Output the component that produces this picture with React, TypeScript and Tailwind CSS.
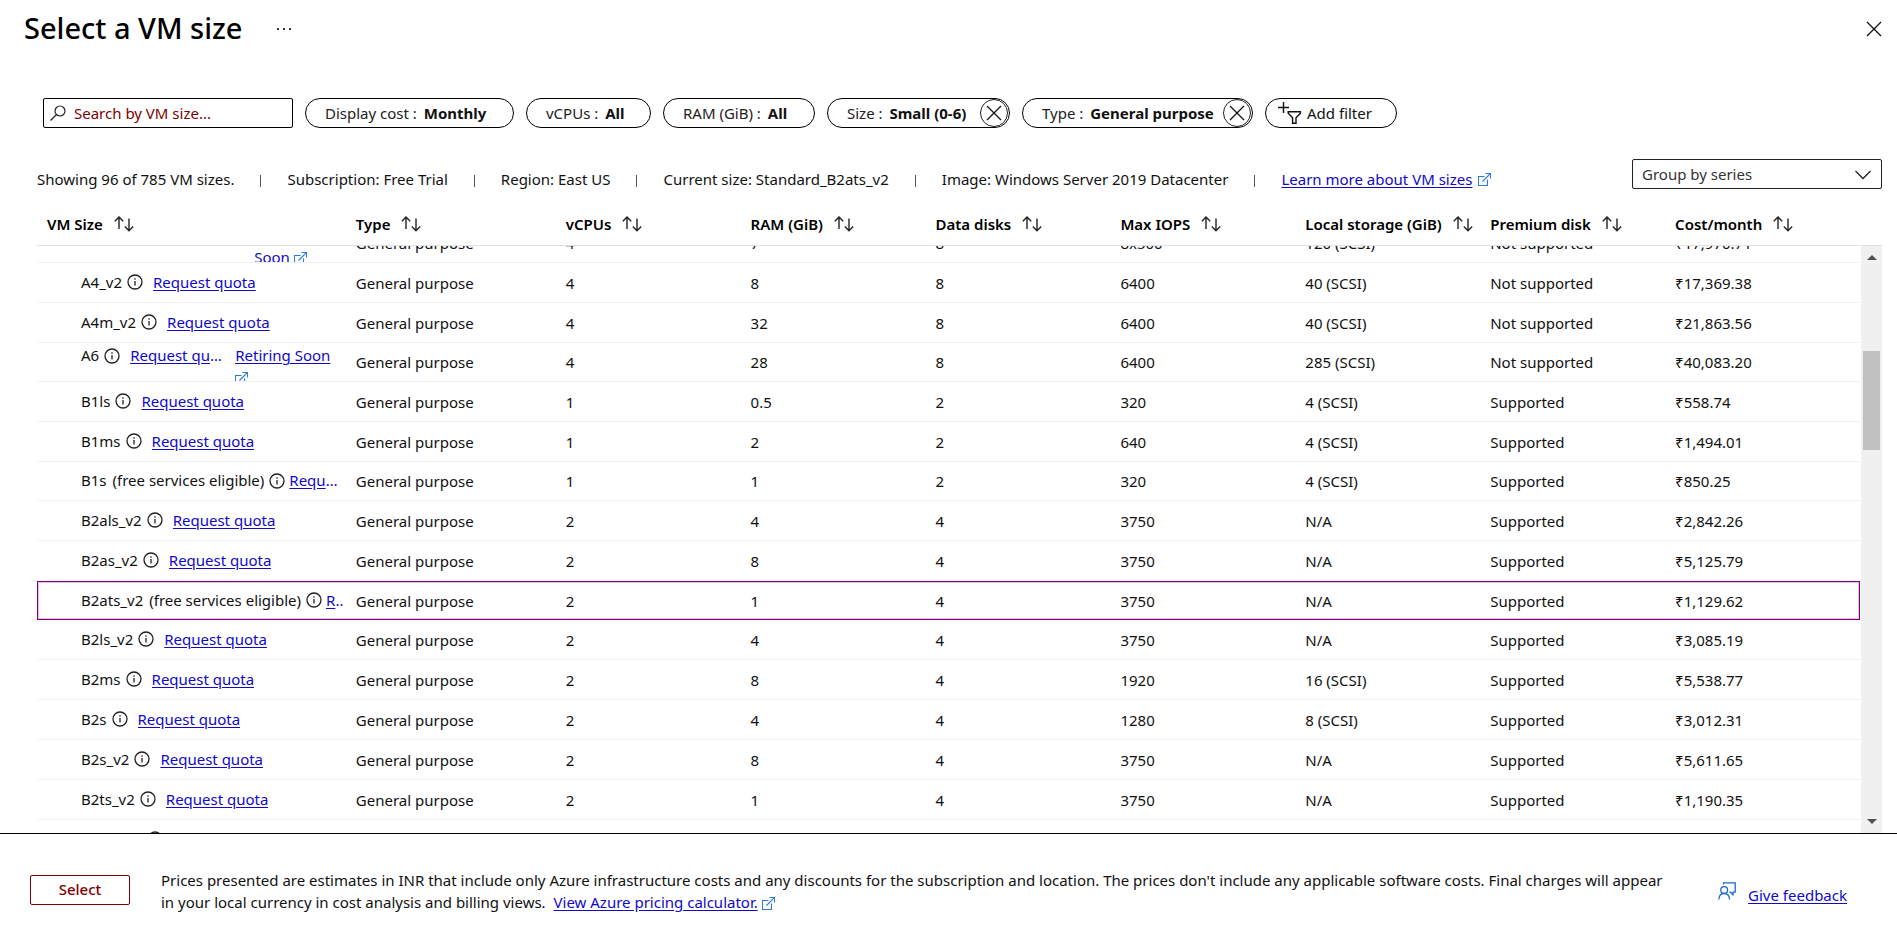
import { Fragment, useLayoutEffect, useRef } from "react";
import type { ReactNode } from "react";

type VmSize = {
  name: string;
  free?: boolean;
  retiring?: "wrap-text" | "wrap-icon";
  selected?: boolean;
  cells: string[];
};

const GP = "General purpose";

const SIZES: VmSize[] = [
  { name: "A3", retiring: "wrap-text", cells: [GP, "4", "7", "8", "8x500", "120 (SCSI)", "Not supported", "₹17,970.71"] },
  { name: "A4_v2", cells: [GP, "4", "8", "8", "6400", "40 (SCSI)", "Not supported", "₹17,369.38"] },
  { name: "A4m_v2", cells: [GP, "4", "32", "8", "6400", "40 (SCSI)", "Not supported", "₹21,863.56"] },
  { name: "A6", retiring: "wrap-icon", cells: [GP, "4", "28", "8", "6400", "285 (SCSI)", "Not supported", "₹40,083.20"] },
  { name: "B1ls", cells: [GP, "1", "0.5", "2", "320", "4 (SCSI)", "Supported", "₹558.74"] },
  { name: "B1ms", cells: [GP, "1", "2", "2", "640", "4 (SCSI)", "Supported", "₹1,494.01"] },
  { name: "B1s", free: true, cells: [GP, "1", "1", "2", "320", "4 (SCSI)", "Supported", "₹850.25"] },
  { name: "B2als_v2", cells: [GP, "2", "4", "4", "3750", "N/A", "Supported", "₹2,842.26"] },
  { name: "B2as_v2", cells: [GP, "2", "8", "4", "3750", "N/A", "Supported", "₹5,125.79"] },
  { name: "B2ats_v2", free: true, selected: true, cells: [GP, "2", "1", "4", "3750", "N/A", "Supported", "₹1,129.62"] },
  { name: "B2ls_v2", cells: [GP, "2", "4", "4", "3750", "N/A", "Supported", "₹3,085.19"] },
  { name: "B2ms", cells: [GP, "2", "8", "4", "1920", "16 (SCSI)", "Supported", "₹5,538.77"] },
  { name: "B2s", cells: [GP, "2", "4", "4", "1280", "8 (SCSI)", "Supported", "₹3,012.31"] },
  { name: "B2s_v2", cells: [GP, "2", "8", "4", "3750", "N/A", "Supported", "₹5,611.65"] },
  { name: "B2ts_v2", cells: [GP, "2", "1", "4", "3750", "N/A", "Supported", "₹1,190.35"] },
  { name: "B4als_v2", cells: [GP, "4", "8", "8", "6400", "N/A", "Supported", "₹5,684.53"] },
];

const COLUMNS = [
  "VM Size",
  "Type",
  "vCPUs",
  "RAM (GiB)",
  "Data disks",
  "Max IOPS",
  "Local storage (GiB)",
  "Premium disk",
  "Cost/month",
];

const GRID =
  "grid grid-cols-[minmax(0,309fr)_minmax(0,210fr)_repeat(6,minmax(0,185fr))_minmax(0,195fr)]";

const INFO = [
  "Showing 96 of 785 VM sizes.",
  "Subscription: Free Trial",
  "Region: East US",
  "Current size: Standard_B2ats_v2",
  "Image: Windows Server 2019 Datacenter",
];

const LINK = "text-[#1008cc] underline underline-offset-2";

function ExternalIcon() {
  return (
    <svg className="inline-block size-[13px] shrink-0" viewBox="0 0 13 13" fill="none" stroke="#2f7ae0" strokeWidth="1.1" aria-hidden="true">
      <path d="M6.5 3.5H.5v9h9V6.5" />
      <path d="M4.5 8.5 12 1M7.5.5h5v5" />
    </svg>
  );
}

function SortIcon() {
  return (
    <svg className="h-4 w-5 shrink-0" viewBox="0 0 20 16" fill="none" stroke="#222" strokeWidth="1.4" aria-hidden="true">
      <path d="M5 13V1M.8 5.2 5 1l4.2 4.2" />
      <path d="M15 2.5v12.3M10.8 10.6 15 14.8l4.2-4.2" />
    </svg>
  );
}

function InfoIcon() {
  return (
    <svg className="size-4 shrink-0" viewBox="0 0 16 16" fill="none" stroke="#222" strokeWidth="1.3" aria-hidden="true">
      <circle cx="8" cy="8" r="7" />
      <path d="M8 7v4.5M8 4.3v1.4" />
    </svg>
  );
}

function CrossIcon({ className }: { className: string }) {
  return (
    <svg className={className} viewBox="0 0 16 16" fill="none" stroke="#111" strokeWidth="1.3" aria-hidden="true">
      <path d="m1 1 14 14M15 1 1 15" />
    </svg>
  );
}

function Pill({ label, value, width, removable }: { label: string; value: string; width: string; removable?: boolean }) {
  return (
    <div className={`${width} flex h-[30px] items-center rounded-full border border-black`}>
      <button type="button" className="h-full flex-1 pl-[19px] text-left whitespace-nowrap text-[#222]">
        {label} : <span className="ml-[3px] font-bold text-[#111]">{value}</span>
      </button>
      {removable && (
        <button type="button" aria-label={`Remove ${label} filter`} className="mr-px flex size-[28px] shrink-0 items-center justify-center rounded-full border border-[#222]">
          <CrossIcon className="size-4" />
        </button>
      )}
    </div>
  );
}

function NameCell({ size }: { size: VmSize }) {
  let links: ReactNode;
  if (size.retiring) {
    const wrapText = size.retiring === "wrap-text";
    links = (
      <>
        <a href="#quota" className={`${LINK} ml-[10px] truncate ${wrapText ? "w-[106px]" : "w-24"}`}>Request quota</a>
        <span className={wrapText ? "ml-[18px] w-20" : "ml-[9px] w-[102px]"}>
          <a href="#retiring" className={LINK}>Retiring Soon</a> <ExternalIcon />
        </span>
      </>
    );
  } else {
    links = <a href="#quota" className={`${LINK} truncate ${size.free ? "ml-1" : "ml-[10px]"}`}>Request quota</a>;
  }
  return (
    <div className={`flex h-full overflow-hidden pr-[2px] pl-11 leading-[22px] ${size.retiring ? "items-start pt-px" : "items-center pb-[2px]"}`}>
      <span className="whitespace-nowrap">
        {size.name}
        {size.free && <span className="ml-[6px]">(free services eligible)</span>}
      </span>
      <button type="button" aria-label={`About ${size.name}`} className="ml-[5px] flex h-[22px] shrink-0 items-center pt-px">
        <InfoIcon />
      </button>
      {links}
    </div>
  );
}

export default function App() {
  const body = useRef<HTMLTableSectionElement>(null);

  useLayoutEffect(() => {
    if (body.current) body.current.scrollTop = 23;
  }, []);

  return (
    <div className="flex h-screen flex-col bg-white font-['Noto_Sans','Open_Sans',sans-serif] text-[15px] leading-5 text-[#111]">
      <header className="flex h-[58px] items-center pr-[15px] pl-6">
        <h1 className="pb-[2px] text-[29px] leading-10 font-medium text-black">Select a VM size</h1>
        <button type="button" aria-label="More" className="ml-[34px] flex gap-1">
          <span className="size-[2px] bg-[#333]" />
          <span className="size-[2px] bg-[#333]" />
          <span className="size-[2px] bg-[#333]" />
        </button>
        <button type="button" aria-label="Close" className="ml-auto">
          <CrossIcon className="size-4" />
        </button>
      </header>

      <div className="mt-10 flex items-center gap-3 px-[43px]">
        <label className="flex h-[30px] w-[250px] items-center gap-2 rounded-[2px] border border-black px-[6px]">
          <svg className="size-4 shrink-0" viewBox="0 0 16 16" fill="none" stroke="#222" strokeWidth="1.2" aria-hidden="true">
            <circle cx="10" cy="6" r="5" />
            <path d="M6.5 9.5.5 15.5" />
          </svg>
          <input aria-label="Search by VM size" placeholder="Search by VM size..." className="min-w-0 flex-1 outline-none placeholder:text-[#800000] placeholder:opacity-100" />
        </label>
        <Pill label="Display cost" value="Monthly" width="w-[209px]" />
        <Pill label="vCPUs" value="All" width="w-[125px]" />
        <Pill label="RAM (GiB)" value="All" width="w-[152px]" />
        <Pill label="Size" value="Small (0-6)" width="w-[183px]" removable />
        <Pill label="Type" value="General purpose" width="w-[231px]" removable />
        <button type="button" className="flex h-[30px] w-[132px] items-center gap-[5px] rounded-full border border-black pl-3">
          <svg className="h-[22px] w-6" viewBox="0 0 24 22" fill="none" stroke="#111" strokeWidth="1.4" aria-hidden="true">
            <path d="M5.5 0v11M0 5.5h11" />
            <path d="M10.2 9.7h12.2v1.5l-4.4 4.6v5.4h-3.4v-5.4l-4.4-4.6z" />
          </svg>
          Add filter
        </button>
      </div>

      <div className="mt-[31px] flex h-[42px] items-start pr-[15px] pl-[37px]">
        <div className="flex items-center gap-[26px] pt-[10px] whitespace-nowrap">
          {INFO.map((text) => (
            <Fragment key={text}>
              <span>{text}</span>
              <span className="mt-1 h-3 w-px bg-[#555]" />
            </Fragment>
          ))}
          <span className="flex items-center gap-[6px]">
            <a href="#sizes" className={LINK}>Learn more about VM sizes</a>
            <ExternalIcon />
          </span>
        </div>
        <div className="relative ml-auto w-[250px]">
          <select aria-label="Grouping" className="h-[30px] w-full appearance-none rounded-[2px] border border-[#222] bg-white px-[9px] text-[#333]">
            <option>Group by series</option>
          </select>
          <svg className="pointer-events-none absolute top-[11px] right-[11px] h-[10px] w-4" viewBox="0 0 16 10" fill="none" stroke="#222" strokeWidth="1.3" aria-hidden="true">
            <path d="m.5 1 7.5 7.5L15.5 1" />
          </svg>
        </div>
      </div>

      <main className="flex min-h-0 flex-1 pr-[15px] pl-[37px]">
        <table className="mr-px flex min-w-0 flex-1 flex-col">
          <thead className="block border-b border-[#e1e1e1]">
            <tr className={`${GRID} h-[44px] items-center pt-[2px]`}>
              {COLUMNS.map((title) => (
                <th key={title} scope="col" className="pl-[10px] text-left font-semibold whitespace-nowrap text-black">
                  <button type="button" className="flex items-center gap-[11px]">
                    {title}
                    <SortIcon />
                  </button>
                </th>
              ))}
            </tr>
          </thead>
          <tbody ref={body} className="block min-h-0 flex-1 overflow-y-auto [scrollbar-width:none]">
            {SIZES.map((size) => (
              <tr
                key={size.name}
                className={`${GRID} items-center ${
                  size.selected
                    ? "h-[39px] shadow-[inset_0_0_0_1px_#800080,inset_0_0_0_2px_#e3bfe3]"
                    : size.free || size.retiring === "wrap-icon"
                      ? "h-[39px] border-b border-[#f0f0f0]"
                      : "h-10 border-b border-[#f0f0f0]"
                }`}
              >
                <td className="h-full min-h-0 overflow-hidden">
                  <NameCell size={size} />
                </td>
                {size.cells.map((cell, i) => (
                  <td key={COLUMNS[i + 1]} className="pl-[10px] whitespace-nowrap">
                    {cell}
                  </td>
                ))}
              </tr>
            ))}
          </tbody>
        </table>
        <div className="flex w-[21px] flex-col pt-[44px]" aria-hidden="true">
          <div className="flex flex-1 flex-col items-center border-t border-[#e1e1e1] bg-[#f0f0f0] pt-[9px] pb-[9px]">
            <svg className="h-[5px] w-[10px]" viewBox="0 0 10 5" fill="#505050"><path d="M0 5 5 0l5 5z" /></svg>
            <div className="mt-[91px] h-[99px] w-[17px] bg-[#c1c1c1]" />
            <svg className="mt-auto h-[5px] w-[10px]" viewBox="0 0 10 5" fill="#505050"><path d="m0 0 5 5 5-5z" /></svg>
          </div>
        </div>
      </main>

      <footer className="flex h-[99px] items-center border-t border-black pr-[50px] pl-[30px]">
        <button type="button" className="mt-[13px] h-[30px] w-[100px] shrink-0 rounded-[2px] border border-[#800000] pb-px font-medium text-[#800000]">
          Select
        </button>
        <p className="mt-4 ml-[31px] max-w-[1510px] flex-1 leading-[22px]">
          Prices presented are estimates in INR that include only Azure infrastructure costs and any discounts for the
          subscription and location. The prices don't include any applicable software costs. Final charges will appear
          in your local currency in cost analysis and billing views.{" "}
          <a href="#calculator" className={`${LINK} ml-1`}>View Azure pricing calculator.</a>{" "}
          <ExternalIcon />
        </p>
        <div className="mt-6 ml-auto flex shrink-0 items-center gap-3">
          <svg className="mb-2 size-[18px]" viewBox="0 0 18 18" fill="none" stroke="#1a66d6" strokeWidth="1.3" aria-hidden="true">
            <path d="M5.5 2.6V.8h11.7v9.4H15v2.6l-2.6-2.6h-1" />
            <circle cx="6.2" cy="8" r="3.4" />
            <path d="M.8 17.5c.2-3.8 2.3-6 5.4-6s5.200 2.200 5.400 6" />
          </svg>
          <a href="#feedback" className={LINK}>Give feedback</a>
        </div>
      </footer>
    </div>
  );
}
